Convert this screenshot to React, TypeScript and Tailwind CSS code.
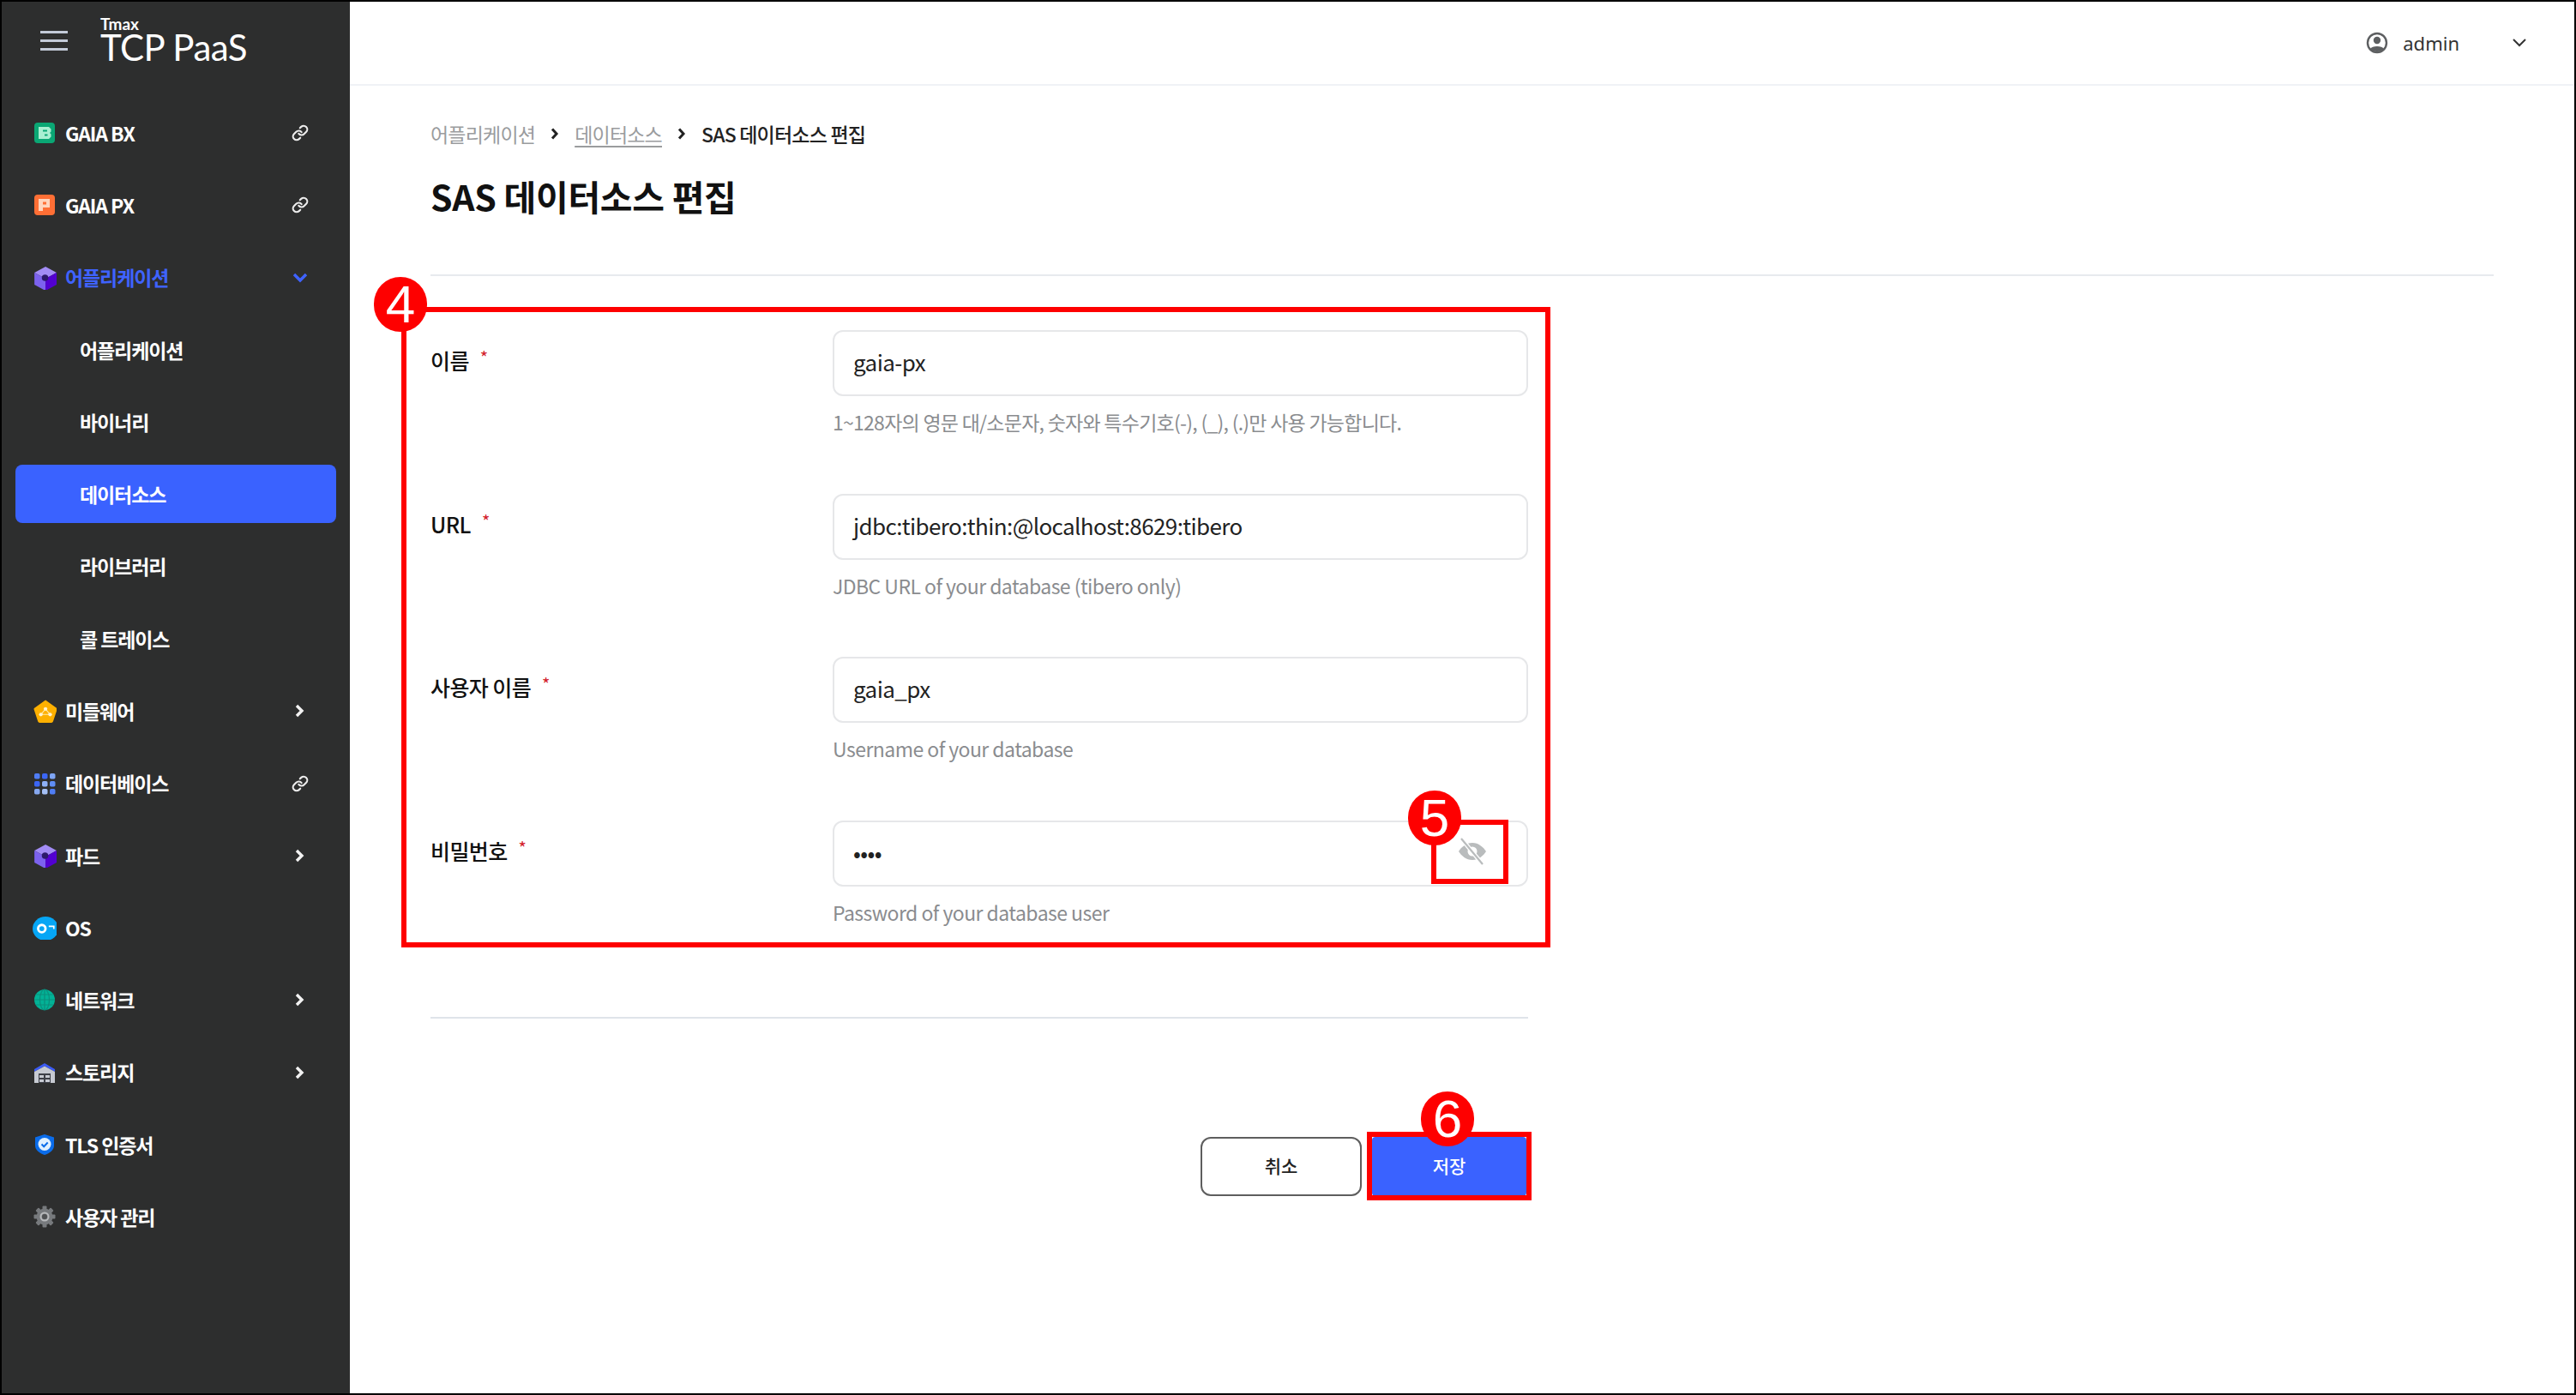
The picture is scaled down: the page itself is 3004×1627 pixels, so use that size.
import React from "react";
import { Link as LinkGlyph } from "lucide-react";

const font = { fontFamily: '"Noto Sans CJK KR", "Noto Sans", sans-serif' };

const Svg = ({ children, size = 26 }: { children: React.ReactNode; size?: number }) => (
  <svg width={size} height={size} viewBox="0 0 26 26" className="shrink-0">
    {children}
  </svg>
);

const BxIcon = () => (
  <Svg>
    <rect x="1" y="1" width="24" height="24" rx="4" fill="#0aa774" />
    <path d="M6 6h12l2.500 2.500v3L19 13l1.500 1.500v3L18 20H6z" fill="#a9efd2" />
    <path d="M11 9.500h5v2h-5zM13 14.500h3.500v2H13z" fill="#0aa774" />
  </Svg>
);
const PxIcon = () => (
  <Svg>
    <rect x="1" y="1" width="24" height="24" rx="4" fill="#ff6f35" />
    <path d="M6 6h13v10H11v4H6z" fill="#ffd5bd" />
    <rect x="11" y="9.500" width="4" height="3" fill="#ff6f35" />
  </Svg>
);
const CubeIcon = () => (
  <Svg size={28}>
    <path d="M14 1l12 6.500-12 6.500L2 7.500z" fill="#a28cf5" />
    <path d="M2 7.500l12 6.500v13L2 20.500z" fill="#7c62ee" />
    <path d="M26 7.500L14 14v13l12-6.500z" fill="#5200d0" />
    <circle cx="13.500" cy="13" r="3.500" fill="#2c1a6b" />
  </Svg>
);
const MiddleIcon = () => (
  <Svg size={28}>
    <path d="M14 1.500l12 8.500a1.500 1.500 0 0 1 .5 1.700l-4.300 13a2 2 0 0 1-1.900 1.300H7.700a2 2 0 0 1-1.900-1.300l-4.300-13A1.500 1.500 0 0 1 2 10z" fill="#fdb000" />
    <path d="M14 11l-5 6M14 11l5 6M9 17h10" stroke="#ffe7a8" strokeWidth="1" />
    <circle cx="14" cy="11" r="2" fill="#fff3d0" />
    <circle cx="9" cy="17" r="2" fill="#fff3d0" />
    <circle cx="19" cy="17" r="2" fill="#fff3d0" />
  </Svg>
);
const GridIcon = () => (
  <Svg>
    {[
      [1, 1, "#4f7df5"],
      [10, 1, "#3b66f5"],
      [19, 1, "#7ea5f5"],
      [1, 10, "#3b66f5"],
      [10, 10, "#8db0f7"],
      [19, 10, "#5f8df5"],
      [1, 19, "#86a8f0"],
      [10, 19, "#a5c0f5"],
      [19, 19, "#4f7df5"],
    ].map(([x, y, c], i) => (
      <rect key={i} x={x as number} y={y as number} width="6.500" height="6.500" rx="1.800" fill={c as string} />
    ))}
  </Svg>
);
const OsIcon = () => (
  <Svg size={28}>
    <ellipse cx="14" cy="14" rx="14" ry="13" fill="#06a6f5" />
    <circle cx="10" cy="14" r="4" fill="none" stroke="#fff" strokeWidth="2.600" />
    <path d="M17.500 11.500h5.500v3" fill="none" stroke="#fff" strokeWidth="1.600" />
  </Svg>
);
const GlobeIcon = () => (
  <Svg>
    <circle cx="13" cy="13" r="12" fill="#02b296" />
    <g fill="none" stroke="#0a8f7d" strokeWidth="1.200">
      <ellipse cx="13" cy="13" rx="5.500" ry="12" />
      <path d="M13 1v24M1 13h24M3 7h20M3 19h20" />
    </g>
  </Svg>
);
const StorageIcon = () => (
  <Svg>
    <path d="M1 9l12-7 12 7v3L13 5.500 1 12z" fill="#3b5bf5" />
    <path d="M1 12L13 5.500 25 12v13H1z" fill="#c6cad2" />
    <rect x="6" y="14" width="14" height="11" fill="#3d4048" />
    <path d="M7 16h5v3H7zM14 16h5v3h-5zM7 21h5v3H7zM14 21h5v3h-5z" fill="#c6cad2" />
  </Svg>
);
const ShieldIcon = () => (
  <Svg>
    <path d="M13 1l11 3.500V14c0 5.500-5 9-11 11C7 23 2 19.500 2 14V4.500z" fill="#0a6cea" />
    <circle cx="13" cy="12.500" r="7.500" fill="#dff0ff" />
    <path d="M9.500 12.500l2.700 2.700 4.500-4.700" fill="none" stroke="#0a6cea" strokeWidth="2" />
  </Svg>
);
const GearIcon = () => (
  <Svg>
    <g fill="#777a7d">
      <circle cx="13" cy="13" r="9.500" />
      {[0, 45, 90, 135, 180, 225, 270, 315].map((a) => (
        <rect key={a} x="10.500" y="0.500" width="5" height="6" rx="1" transform={`rotate(${a} 13 13)`} />
      ))}
    </g>
    <circle cx="13" cy="13" r="4.500" fill="none" stroke="#b8babc" strokeWidth="2" />
    <circle cx="13" cy="13" r="3" fill="#4f5153" />
  </Svg>
);

const ChevronRight = () => (
  <svg width="12" height="16" viewBox="0 0 12 16" fill="none" stroke="#f2f2f2" strokeWidth="3.400" className="shrink-0">
    <path d="M2 2l6 6-6 6" />
  </svg>
);
const ChevronDown = () => (
  <svg width="18" height="12" viewBox="0 0 18 12" fill="none" stroke="#3f63ff" strokeWidth="3.400" className="shrink-0">
    <path d="M2 2l7 7 7-7" />
  </svg>
);

type Item = {
  label: string;
  icon?: React.ReactNode;
  tail?: "link" | "right" | "down";
  blue?: boolean;
  active?: boolean;
};

const items: Item[] = [
  { label: "GAIA BX", icon: <BxIcon />, tail: "link" },
  { label: "GAIA PX", icon: <PxIcon />, tail: "link" },
  { label: "어플리케이션", icon: <CubeIcon />, tail: "down", blue: true },
  { label: "어플리케이션" },
  { label: "바이너리" },
  { label: "데이터소스", active: true },
  { label: "라이브러리" },
  { label: "콜 트레이스" },
  { label: "미들웨어", icon: <MiddleIcon />, tail: "right" },
  { label: "데이터베이스", icon: <GridIcon />, tail: "link" },
  { label: "파드", icon: <CubeIcon />, tail: "right" },
  { label: "OS", icon: <OsIcon /> },
  { label: "네트워크", icon: <GlobeIcon />, tail: "right" },
  { label: "스토리지", icon: <StorageIcon />, tail: "right" },
  { label: "TLS 인증서", icon: <ShieldIcon /> },
  { label: "사용자 관리", icon: <GearIcon /> },
];

const NavRow = ({ item }: { item: Item }) => {
  if (!item.icon) {
    return (
      <div className="h-[84.27px] flex items-center">
        <div
          className={`h-[68px] w-[374px] ml-[16px] pl-[75px] flex items-center rounded-[8px] text-[23px] font-bold tracking-[-1.1px] text-white ${
            item.active ? "bg-[#3a62ff]" : ""
          }`}
        >
          {item.label}
        </div>
      </div>
    );
  }
  return (
    <div className="h-[84.27px] flex items-center pl-[36px] pr-[48px]">
      <div className="w-[28px] h-[28px] flex items-center justify-center shrink-0">{item.icon}</div>
      <span
        className={`ml-[10px] flex-1 text-[23px] font-bold tracking-[-1.1px] ${
          item.blue ? "text-[#3f63ff]" : "text-white"
        }`}
      >
        {item.label}
      </span>
      <div className="w-[20px] flex justify-center">
        {item.tail === "link" && <LinkGlyph size={20} strokeWidth={2.6} color="#ececec" className="shrink-0" />}
        {item.tail === "right" && <ChevronRight />}
        {item.tail === "down" && <ChevronDown />}
      </div>
    </div>
  );
};

const Sidebar = () => (
  <aside className="w-[406px] shrink-0 bg-[#2d2e2e]">
    <div className="h-[111px] flex items-start pl-[45px]">
      <div className="mt-[34px] w-[32px] flex flex-col gap-[7px]">
        <div className="h-[3px] bg-[#c3cad8]" />
        <div className="h-[3px] bg-[#c3cad8]" />
        <div className="h-[3px] bg-[#c3cad8]" />
      </div>
      <div className="ml-[38px] mt-[17px] flex flex-col text-white" style={{ fontFamily: "Lato, sans-serif" }}>
        <span className="text-[19px] leading-[17px] font-bold">Tmax</span>
        <span className="text-[42px] leading-[38px] tracking-[-0.5px] font-normal">TCP PaaS</span>
      </div>
    </div>
    {items.map((it, i) => (
      <NavRow key={i} item={it} />
    ))}
  </aside>
);

const Field = ({
  label,
  value,
  hint,
  hintClass = "tracking-[-0.54px]",
  children,
}: {
  label: string;
  value: string;
  hint: string;
  hintClass?: string;
  children?: React.ReactNode;
}) => (
  <div className="flex h-[190.5px] items-start">
    <div className="w-[469px] shrink-0 h-[77px] flex items-start pt-[17px]">
      <span className="text-[25px] leading-[36px] font-medium tracking-[-0.6px] text-[#111]">{label}</span>
      <span className="ml-[13px] text-[20px] leading-[30px] text-[#d3202a]">*</span>
    </div>
    <div className="flex-1">
      <div className="h-[77px] border-2 border-[#e6e7e9] rounded-[12px] flex items-center pl-[22px] pr-[45px] pb-[4px] text-[26px] tracking-[-0.6px] text-[#222]">
        <span className="flex-1">{value}</span>
        {children}
      </div>
      <p className={`mt-[14px] text-[23px] leading-[32px] text-[#8a8c8f] ${hintClass}`}>{hint}</p>
    </div>
  </div>
);

const EyeOff = () => (
  <svg width="36" height="32" viewBox="0 0 36 32" className="shrink-0">
    <path
      fillRule="evenodd"
      d="M18 6c7 0 13 5 16 10-3 5-9 10-16 10S5 21 2 16C5 11 11 6 18 6zm0 4.500a5.500 5.500 0 1 0 0 11 5.500 5.500 0 0 0 0-11z"
      fill="#b9bcbd"
    />
    <path d="M5 1l25 30" stroke="#ffffff" strokeWidth="5" />
    <path d="M5 1l25 30" stroke="#b9bcbd" strokeWidth="2.200" />
  </svg>
);

const Badge = ({ n, className }: { n: string; className: string }) => (
  <div
    className={`absolute w-[62px] h-[64px] rounded-full bg-[#fe0000] text-white flex items-center justify-center text-[62px] leading-none ${className}`}
    style={{ fontFamily: '"Liberation Sans", sans-serif' }}
  >
    {n}
  </div>
);

export default function App() {
  return (
    <div className="w-[3004px] h-[1627px] bg-black p-[2px] overflow-hidden" style={font}>
      <div className="relative flex h-full bg-white">
        <Sidebar />
        <main className="flex-1 flex flex-col">
          <header className="h-[98px] shrink-0 border-b-2 border-[#f0f2f6] flex items-center justify-end pr-[54px] text-[#333]">
            <svg width="26" height="26" viewBox="0 0 26 26" className="shrink-0">
              <circle cx="13" cy="13" r="11" fill="none" stroke="#5d5f61" strokeWidth="2.400" />
              <circle cx="13" cy="10" r="4.200" fill="#5d5f61" />
              <path d="M5 20c2-4 14-4 16 0-3 4-13 4-16 0z" fill="#5d5f61" />
            </svg>
            <span className="ml-[17px] text-[22px]" style={{ fontFamily: '"Noto Sans", sans-serif' }}>
              admin
            </span>
            <svg width="20" height="12" viewBox="0 0 20 12" fill="none" stroke="#333" strokeWidth="2" className="ml-[60px] shrink-0">
              <path d="M3 2l7 7 7-7" />
            </svg>
          </header>
          <div className="px-[94px] flex-1">
            <nav className="mt-[38px] h-[36px] flex items-center text-[23px] tracking-[-0.8px]">
              <span className="text-[#9a9c9e]">어플리케이션</span>
              <svg width="10" height="14" viewBox="0 0 10 14" fill="none" stroke="#222" strokeWidth="3" className="mx-[18px]">
                <path d="M2 1.500l5 5.500-5 5.500" />
              </svg>
              <span className="text-[#9a9c9e] underline underline-offset-4">데이터소스</span>
              <svg width="10" height="14" viewBox="0 0 10 14" fill="none" stroke="#222" strokeWidth="3" className="mx-[18px]">
                <path d="M2 1.500l5 5.500-5 5.500" />
              </svg>
              <span className="text-[#222] font-medium">SAS 데이터소스 편집</span>
            </nav>
            <h1 className="mt-[26px] text-[41px] leading-[56px] font-bold tracking-[-0.3px] text-[#111]">
              SAS 데이터소스 편집
            </h1>
            <div className="mt-[64px] h-[2px] bg-[#e7eaee]" />
            <div className="mt-[63px] w-[1280px]">
              <Field
                label="이름"
                value="gaia-px"
                hint="1~128자의 영문 대/소문자, 숫자와 특수기호(-), (_), (.)만 사용 가능합니다."
                hintClass="tracking-[-0.74px]"
              />
              <Field label="URL" value="jdbc:tibero:thin:@localhost:8629:tibero" hint="JDBC URL of your database (tibero only)" />
              <Field label="사용자 이름" value="gaia_px" hint="Username of your database" />
              <Field label="비밀번호" value="••••" hint="Password of your database user">
                <EyeOff />
              </Field>
              <div className="mt-[39px] h-[2px] bg-[#dfe4ea]" />
              <div className="mt-[138px] flex justify-end gap-[12px] pr-[2px]">
                <button className="w-[188px] h-[69px] pb-[2px] rounded-[12px] border-2 border-[#5e5e5e] bg-white text-[21px] font-medium text-[#222]">
                  취소
                </button>
                <button className="w-[180px] h-[69px] pb-[2px] rounded-[4px] bg-[#3a62ff] text-[21px] font-medium text-white">
                  저장
                </button>
              </div>
            </div>
          </div>
        </main>

        <div className="absolute left-[466px] top-[356px] w-[1340px] h-[747px] border-[6px] border-[#fe0000]" />
        <div className="absolute left-[1667px] top-[954px] w-[90px] h-[75px] border-[6px] border-[#fe0000]" />
        <div className="absolute left-[1592px] top-[1318px] w-[192px] h-[80px] border-[6px] border-[#fe0000]" />
        <Badge n="4" className="left-[434px] top-[321px]" />
        <Badge n="5" className="left-[1640px] top-[920px]" />
        <Badge n="6" className="left-[1655px] top-[1271px]" />
      </div>
    </div>
  );
}
